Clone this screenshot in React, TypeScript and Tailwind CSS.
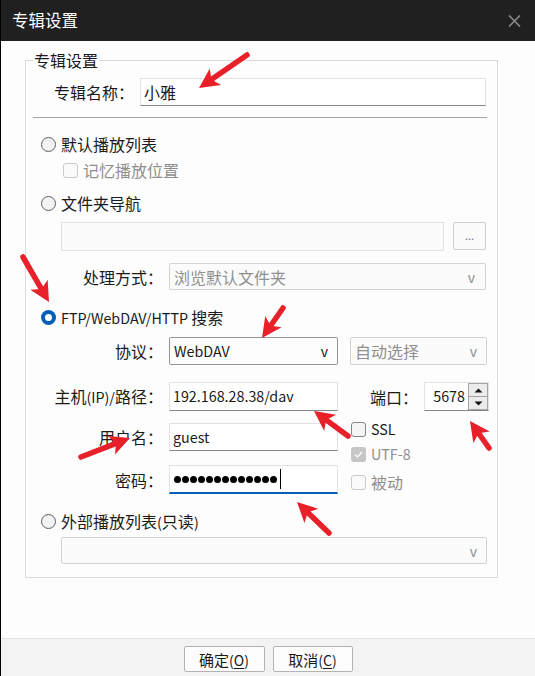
import React from "react";

type Pt = { x1: number; y1: number; x2: number; y2: number };

function Arrow({ x1, y1, x2, y2 }: Pt) {
  const dx = x2 - x1;
  const dy = y2 - y1;
  const len = Math.hypot(dx, dy);
  const ux = dx / len;
  const uy = dy / len;
  const hl = 20;
  const hw = 10;
  const bx = x2 - ux * hl;
  const by = y2 - uy * hl;
  const px = -uy;
  const py = ux;
  const nx = bx + ux * 5;
  const ny = by + uy * 5;
  return (
    <g>
      <line x1={x1} y1={y1} x2={nx} y2={ny} stroke="#e8202a" strokeWidth={5.5} strokeLinecap="round" />
      <polygon
        points={`${x2},${y2} ${bx + px * hw},${by + py * hw} ${nx},${ny} ${bx - px * hw},${by - py * hw}`}
        fill="#e8202a"
      />
    </g>
  );
}

function Radio({ on }: { on?: boolean }) {
  if (on)
    return (
      <span className="flex h-[15px] w-[15px] shrink-0 items-center justify-center rounded-full bg-[#005fb8]">
        <span className="h-[7px] w-[7px] rounded-full bg-white" />
      </span>
    );
  return <span className="h-[15px] w-[15px] shrink-0 rounded-full border border-[#5f5f5f] bg-[#f3f3f3]" />;
}

function Check({ disabled, checked }: { disabled?: boolean; checked?: boolean }) {
  if (checked)
    return (
      <span className="flex h-[15px] w-[15px] shrink-0 items-center justify-center rounded-[3px] bg-[#c6c6c6]">
        <svg width="9" height="7" viewBox="0 0 9 7">
          <path d="M1 3.5 L3.5 6 L8 1" stroke="#fff" strokeWidth="1.2" fill="none" />
        </svg>
      </span>
    );
  return (
    <span
      className={
        disabled
          ? "h-[15px] w-[15px] shrink-0 rounded-[3px] border border-[#cacaca] bg-[#fafafa]"
          : "h-[15px] w-[15px] shrink-0 rounded-[3px] border border-[#858585] bg-[#f5f5f5]"
      }
    />
  );
}

function Label({ w, children }: { w: string; children: React.ReactNode }) {
  return <div className={`${w} shrink-0 text-right`}>{children}</div>;
}

function L({ children }: { children: React.ReactNode }) {
  return <span className="text-[14.3px]">{children}</span>;
}

export default function App() {
  return (
    <div className="relative flex h-[676px] w-[535px] flex-col overflow-hidden border-l border-black bg-[#fdfdfd] font-['Noto_Sans_CJK_SC','Noto_Sans',sans-serif] text-[16px] leading-none text-[#1a1a1a]">
      {/* Title bar */}
      <div className="flex h-[41px] shrink-0 items-center justify-between bg-[#202020] pl-[11px] pr-[14px]">
        <span className="text-[16.5px] text-white">专辑设置</span>
        <svg width="13" height="12" viewBox="0 0 13 12">
          <path d="M1 0.5 L12 11.5 M12 0.5 L1 11.5" stroke="#8a8a8a" strokeWidth="1.6" />
        </svg>
      </div>

      {/* Body */}
      <div className="flex-1">
        <fieldset className="ml-[24px] mt-[9px] w-[473px] border border-[#d9d9d9] pb-[13px]">
          <legend className="ml-[7px] bg-white px-[1px] text-[16px] leading-[20px]">专辑设置</legend>

          {/* name */}
          <div className="mt-[8px] flex h-[28px] items-center">
            <Label w="w-[108px]">专辑名称：</Label>
            <div className="ml-[6px] flex h-[28px] w-[346px] items-center border border-[#e2e2e2] border-b-[#868686] bg-white pl-[3px]">
              小雅
            </div>
          </div>

          <div className="ml-[7px] mt-[11px] h-px w-[454px] bg-[#a3a3a3]" />

          {/* 默认播放列表 */}
          <div className="mt-[12px] flex h-[28px] items-center gap-[5px] pl-[15px]">
            <Radio />
            <span>默认播放列表</span>
          </div>
          <div className="flex h-[24px] items-center gap-[5px] pl-[37px] text-[#8f8f8f]">
            <Check disabled />
            <span>记忆播放位置</span>
          </div>

          {/* 文件夹导航 */}
          <div className="mt-[7px] flex h-[28px] items-center gap-[5px] pl-[15px]">
            <Radio />
            <span>文件夹导航</span>
          </div>
          <div className="mt-[5px] flex items-start pl-[35px]">
            <div className="h-[29px] w-[383px] border border-[#e0e0e0] bg-[#fbfbfb]" />
            <div className="ml-[9px] flex h-[28px] w-[33px] items-end justify-center rounded-[2px] border border-[#cfcfcf] bg-[#fbfbfb] pb-[8px] text-[11px] text-[#6f6f8f]">
              ...
            </div>
          </div>
          <div className="mt-[12px] flex h-[27px] items-center">
            <Label w="w-[137px]">处理方式：</Label>
            <div className="ml-[6px] flex h-[27px] w-[317px] items-center justify-between rounded-[2px] border border-[#d3d3d3] bg-[#fbfbfb] pl-[4px] pr-[10px] text-[#8f8f8f]">
              <span>浏览默认文件夹</span>
              <span className="text-[14px]">v</span>
            </div>
          </div>

          {/* FTP */}
          <div className="mt-[13px] flex h-[28px] items-center gap-[5px] pl-[15px]">
            <Radio on />
            <span>
              <L>FTP/WebDAV/HTTP </L>搜索
            </span>
          </div>
          <div className="mt-[6px] flex h-[28px] items-center">
            <Label w="w-[137px]">协议：</Label>
            <div className="ml-[6px] flex h-[28px] w-[169px] items-center justify-between rounded-[2px] border border-[#959595] bg-[#fdfdfd] pl-[4px] pr-[9px]">
              <L>WebDAV</L>
              <span className="text-[14px]">v</span>
            </div>
            <div className="ml-[12px] flex h-[28px] w-[137px] items-center justify-between rounded-[2px] border border-[#d3d3d3] bg-[#fbfbfb] pl-[4px] pr-[9px] text-[#8f8f8f]">
              <span>自动选择</span>
              <span className="text-[14px]">v</span>
            </div>
          </div>

          <div className="mt-[17px] flex">
            <div className="w-[312px]">
              <div className="flex h-[29px] items-center">
                <Label w="w-[137px]">
                  主机<L>(IP)/</L>路径：
                </Label>
                <div className="ml-[6px] flex h-[29px] w-[169px] items-center border border-[#e2e2e2] border-b-[#868686] bg-white pl-[3px]">
                  <L>192.168.28.38/dav</L>
                </div>
              </div>
              <div className="mt-[12px] flex h-[28px] items-center">
                <Label w="w-[137px]">用户名：</Label>
                <div className="ml-[6px] flex h-[28px] w-[169px] items-center border border-[#e2e2e2] border-b-[#868686] bg-white pl-[3px]">
                  <L>guest</L>
                </div>
              </div>
              <div className="mt-[14px] flex h-[29px] items-center">
                <Label w="w-[137px]">密码：</Label>
                <div className="ml-[6px] flex h-[29px] w-[169px] items-center border border-[#e2e2e2] border-b-2 border-b-[#005fb8] bg-white pl-[4px]">
                  <div className="flex gap-[1px]">
                    {Array.from({ length: 13 }).map((_, i) => (
                      <span key={i} className="h-[7px] w-[7px] rounded-full bg-black" />
                    ))}
                  </div>
                  <span className="ml-[3px] h-[20px] w-px bg-black" />
                </div>
              </div>
            </div>
            <div className="ml-[13px]">
              <div className="flex h-[29px] items-center">
                <Label w="w-[67px]">端口：</Label>
                <div className="ml-[6px] flex h-[29px] w-[65px] items-stretch border border-[#e2e2e2] border-b-[#868686] bg-white">
                  <div className="flex flex-1 items-center justify-end pr-[3px]">
                    <L>5678</L>
                  </div>
                  <div className="flex w-[20px] flex-col border border-[#a5a5a5] bg-[#ececec]">
                    <div className="flex flex-1 items-center justify-center border-b border-[#a5a5a5]">
                      <svg width="9" height="5" viewBox="0 0 9 5">
                        <path d="M0.5 4.5 L4.5 0.5 L8.5 4.5 Z" fill="#111" />
                      </svg>
                    </div>
                    <div className="flex flex-1 items-center justify-center">
                      <svg width="9" height="5" viewBox="0 0 9 5">
                        <path d="M0.5 0.5 L4.5 4.5 L8.5 0.5 Z" fill="#111" />
                      </svg>
                    </div>
                  </div>
                </div>
              </div>
              <div className="mt-[6px] flex h-[24px] items-center gap-[5px]">
                <Check />
                <L>SSL</L>
              </div>
              <div className="mt-[1px] flex h-[24px] items-center gap-[5px] text-[#8f8f8f]">
                <Check checked />
                <L>UTF-8</L>
              </div>
              <div className="mt-[4px] flex h-[24px] items-center gap-[5px] text-[#8f8f8f]">
                <Check disabled />
                <span>被动</span>
              </div>
            </div>
          </div>

          {/* 外部播放列表 */}
          <div className="mt-[14px] flex h-[26px] items-center gap-[5px] pl-[15px]">
            <Radio />
            <span>
              外部播放列表<L>(</L>只读<L>)</L>
            </span>
          </div>
          <div className="ml-[35px] mt-[3px] flex h-[27px] w-[426px] items-center justify-end rounded-[2px] border border-[#d3d3d3] bg-[#fbfbfb] pr-[9px] text-[#8f8f8f]">
            <span className="text-[14px]">v</span>
          </div>
        </fieldset>
      </div>

      {/* Footer */}
      <div className="flex h-[38px] shrink-0 justify-center gap-[8px] border-t border-[#e3e3e3] bg-[#f3f3f3] pt-[7px]">
        <button className="h-[26px] w-[81px] rounded-[2px] border border-[#b3b3b3] bg-[#fdfdfd] text-[15px] leading-none text-[#1a1a1a]">
          确定<span className="text-[14px]">(<span className="underline underline-offset-2">O</span>)</span>
        </button>
        <button className="h-[26px] w-[80px] rounded-[2px] border border-[#b3b3b3] bg-[#fdfdfd] text-[15px] leading-none text-[#1a1a1a]">
          取消<span className="text-[14px]">(<span className="underline underline-offset-2">C</span>)</span>
        </button>
      </div>

      {/* Annotation arrows */}
      <svg className="pointer-events-none absolute left-0 top-0" width="535" height="676">
        <Arrow x1={246} y1={55} x2={198} y2={88} />
        <Arrow x1={22} y1={257} x2={48} y2={302} />
        <Arrow x1={282} y1={308} x2={261} y2={338} />
        <Arrow x1={347} y1={436} x2={313} y2={411} />
        <Arrow x1={488} y1={448} x2={469} y2={421} />
        <Arrow x1={80} y1={457} x2={129} y2={438} />
        <Arrow x1={328} y1={533} x2={296} y2={502} />
      </svg>
    </div>
  );
}
